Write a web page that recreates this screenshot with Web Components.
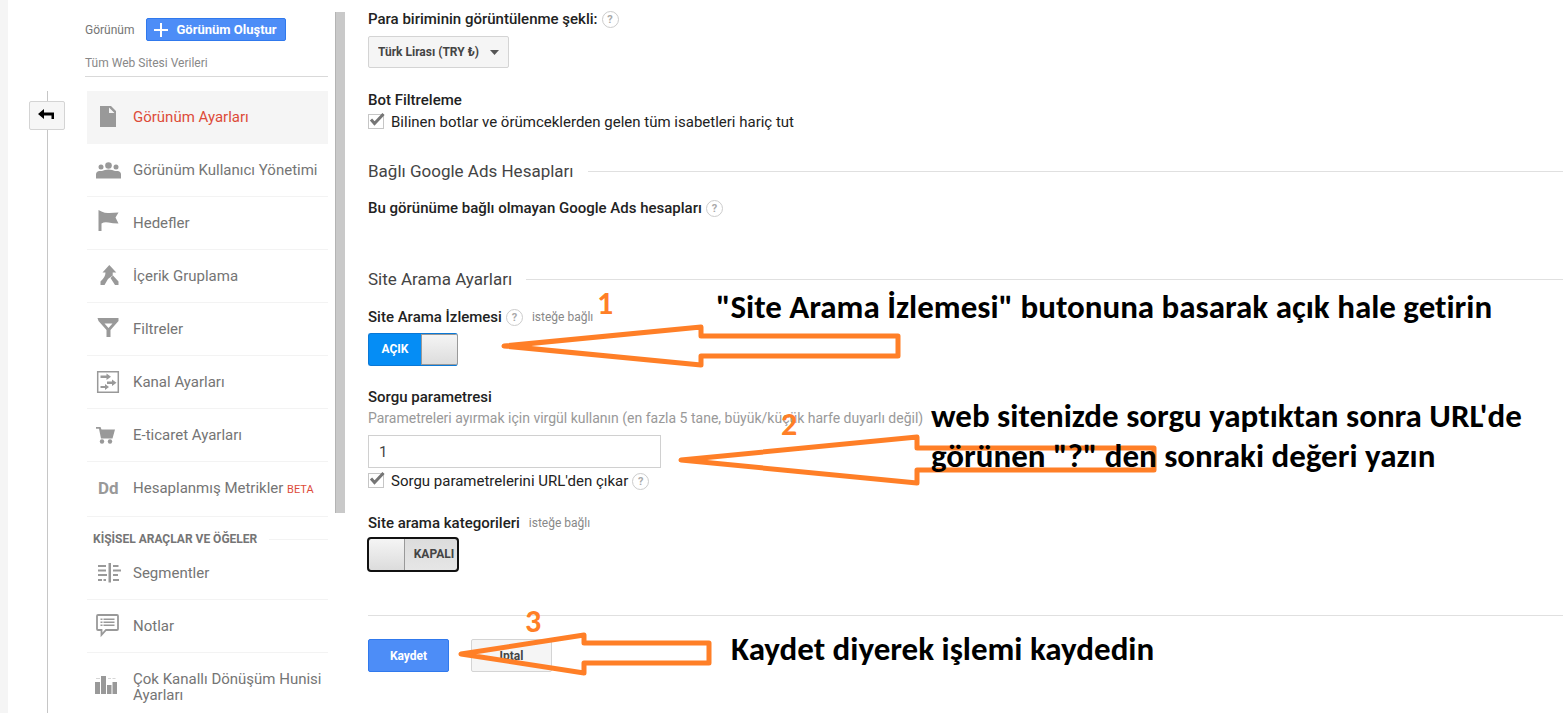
<!DOCTYPE html>
<html lang="tr">
<head>
<meta charset="utf-8">
<title>Görünüm Ayarları</title>
<style>
  body { margin: 0; background: #fff; font-family: Roboto, "Liberation Sans", sans-serif; color: #333; }
</style>
</head>
<body>
<admin-page></admin-page>

<script>
const define = (name, html, setup) => {
  const template = document.createElement('template');
  template.innerHTML = html;
  customElements.define(name, class extends HTMLElement {
    constructor() {
      super();
      this.attachShadow({ mode: 'open' }).append(template.content.cloneNode(true));
    }
    connectedCallback() { if (setup) setup(this, this.shadowRoot); }
  });
};

const ICONS = {
  page: '<path fill-rule="evenodd" d="M5 2h11l5 5v16H5zM14 3.500v5.500h5.500z"/>',
  people: '<circle cx="13.500" cy="8.500" r="3.300"/><circle cx="6" cy="10" r="2.500"/><circle cx="21" cy="10" r="2.500"/><path d="M1 21.500v-4q0-3 3-3.500h3q2.500-1.500 6.500-1.500T20 14h3q3 .5 3 3.500v4z"/>',
  flag: '<path d="M3.500 0l3 1.500q4 2 8 1.500t9-.5l-3 5 3 6q-6 0-10-1t-7 1V21h-3z"/>',
  merge: '<path d="M14.300 2l7 7.500h-3.600v3L13 16l-3.500 6H5.500v-3.500q5-4.500 5-9H7.500zM15.500 15l2.500-2.500 5.500 6V22h-3.500z"/>',
  funnel: '<path fill-rule="evenodd" d="M2.500 2h21v3l-8 9v7h-4v-7l-8-9zM9.500 7.500l4 4.500 4-4.500z"/>',
  channel: '<path fill="none" stroke="#999" stroke-width="1.500" d="M2.700 2.700h20.600v20.600H2.700z"/><path d="M5.500 6.500h6V4.500l4.500 3.300-4.500 3.300v-2h-6zM12 12.500h5v-2l4.500 3.300-4.500 3.300v-2h-5zM5.500 17h4.500v-2l4 3-4 3v-2H5.500z"/>',
  cart: '<path d="M1 5h4.500l1 2.500H20l-2.500 9H6L4 6.800H1z"/><circle cx="7" cy="19.500" r="2.200"/><circle cx="15" cy="19.500" r="2.200"/>',
  segments: '<path d="M13.500 3h2.500v19.500h-2.500zM3 5h8v2H3zM3 9.500h8v2H3zM3 14h9v2H3zM3 19h4v2H3zM8.500 19H11v2H8.500zM18 5h5.500v2H18zM18 9.500h8v2h-8zM18 14h5v2h-5zM18 19h6v2h-6z"/>',
  note: '<path fill="none" stroke="#999" stroke-width="1.800" d="M3 2h19q1 0 1 1v13q0 1-1 1H11l-4.500 5v-5H3q-1 0-1-1V3q0-1 1-1z"/><path d="M5.500 5.500h2v1.500h-2zM8.500 5.500h11v1.500h-11zM5.500 8.500h2V10h-2zM8.500 8.500h11V10h-11zM5.500 11.500h2V13h-2zM8.500 11.500h11V13h-11z"/>',
  bars: '<path d="M0 8h5v12H0zM6 2h5v18H6zM12 11h4.500v9H12zM17.500 8H22v12h-4.500z"/><path opacity=".4" d="M1 4h4v1H1zM13 4h3v1h-3zM17.500 4h3v1h-3z"/>'
};

define('side-item', `
<style>
  :host { display: block; margin-left: 2px; }
  a { display: flex; align-items: center; gap: 12px; padding: 0 0 0 8px; border-bottom: 1px solid #f3f3f3; color: #757575; text-decoration: none; font-size: 15px; line-height: 16px; }
  .text { padding: 18px 0; }
  :host([current]) a { background: #f5f5f5; border-color: #f5f5f5; color: #dd4b39; }
  .icon { flex: none; width: 26px; height: 26px; color: #999; }
  svg { display: block; width: 26px; height: 26px; fill: #999; }
  .glyph { display: block; font-size: 17px; line-height: 24px; font-weight: 700; padding-left: 3px; }
  ::slotted(small) { font-size: 11px; color: #dd4b39; }
</style>
<a href="#"><span class="icon"></span><span class="text"><slot></slot></span></a>`, (el, root) => {
  const name = el.getAttribute('icon');
  if (el.hasAttribute('current')) root.querySelector('a').setAttribute('aria-current', 'page');
  root.querySelector('.icon').innerHTML = ICONS[name]
    ? `<svg viewBox="0 0 26 26" aria-hidden="true">${ICONS[name]}</svg>`
    : `<span class="glyph">${name}</span>`;
});

define('side-nav', `
<style>
  :host { display: block; width: 243px; padding-top: 18px; }
  header { display: flex; align-items: center; gap: 12px; height: 23px; font-size: 12px; color: #757575; }
  button { display: flex; align-items: center; gap: 8px; height: 23px; padding: 0 8px 0 7px; border: 1px solid #3079ed; border-radius: 2px; background: #4d8df7; color: #fff; font: 700 13px/20px Roboto, sans-serif; }
  button svg { width: 14px; height: 14px; stroke: #fff; stroke-width: 2; }
  .property { margin: 14px 0; padding-bottom: 5px; font-size: 12px; line-height: 16px; color: #888; border-bottom: 1px solid #d9d9d9; }
  h2 { display: flex; align-items: center; gap: 12px; margin: 0 0 0 8px; padding: 14px 0 0; font-size: 12px; line-height: 16px; font-weight: 700; color: #757575; }
  h2::after { content: ""; flex: 1; border-top: 1px solid #f3f3f3; }
</style>
<header><span>Görünüm</span>
  <button type="button"><svg viewBox="0 0 14 14" aria-hidden="true"><path d="M7 0v14M0 7h14"/></svg>Görünüm Oluştur</button>
</header>
<div class="property">Tüm Web Sitesi Verileri</div>
<nav>
  <side-item icon="page" current>Görünüm Ayarları</side-item>
  <side-item icon="people">Görünüm Kullanıcı Yönetimi</side-item>
  <side-item icon="flag">Hedefler</side-item>
  <side-item icon="merge">İçerik Gruplama</side-item>
  <side-item icon="funnel">Filtreler</side-item>
  <side-item icon="channel">Kanal Ayarları</side-item>
  <side-item icon="cart">E-ticaret Ayarları</side-item>
  <side-item icon="Dd">Hesaplanmış Metrikler <small>BETA</small></side-item>
  <h2>KİŞİSEL ARAÇLAR VE ÖĞELER</h2>
  <side-item icon="segments">Segmentler</side-item>
  <side-item icon="note">Notlar</side-item>
  <side-item icon="bars">Çok Kanallı Dönüşüm Hunisi Ayarları</side-item>
</nav>`);

define('back-rail', `
<style>
  :host { display: flex; flex-direction: column; align-items: center; width: 36px; padding-top: 91px; }
  i { width: 1px; background: #c6c6c6; height: 10px; }
  i.rest { flex: 1; }
  button { width: 36px; height: 29px; padding: 0 2px 2px 0; display: grid; place-items: center; border: 1px solid #d4d4d4; border-radius: 2px; background: #f6f6f6; }
  svg { width: 16px; height: 11px; }
</style>
<i></i>
<button type="button" aria-label="Geri"><svg viewBox="0 0 16 11" aria-hidden="true"><path d="M0 5L6 0v3.500h10V10h-2.500V6.500H6V10z"/></svg></button>
<i class="rest"></i>`);

define('help-tip', `
<style>
  :host { display: inline-flex; }
  button { width: 17px; height: 17px; padding: 0; border: 1px solid #ccc; border-radius: 50%; background: #fff; color: #aaa; font: 700 11px/15px Roboto, sans-serif; text-align: center; }
</style>
<button type="button" aria-label="Yardım">?</button>`);

define('section-title', `
<style>
  :host { display: block; }
  h2 { display: flex; align-items: center; gap: 14px; margin: 0; font-size: 17px; line-height: 20px; font-weight: 400; color: #444; }
  h2::after { content: ""; flex: 1; border-top: 1px solid #e0e0e0; }
</style>
<h2><slot></slot></h2>`);

define('check-field', `
<style>
  :host { display: block; }
  div { display: flex; align-items: center; gap: 4px; height: 18px; }
  label { display: flex; align-items: center; gap: 7px; font-size: 15px; line-height: 18px; color: #222; }
  .box { position: relative; display: block; width: 16px; height: 16px; }
  input { appearance: none; display: block; box-sizing: border-box; width: 16px; height: 15px; margin: 0; border: 1px solid #c6c6c6; background: #fff; }
  svg { position: absolute; left: 0; top: -2px; width: 18px; height: 16px; fill: none; stroke: #757575; stroke-width: 3; pointer-events: none; }
</style>
<div><label><span class="box"><input type="checkbox" checked><svg viewBox="0 0 18 16" aria-hidden="true"><path d="M3 7.500L6.500 11.500L15.500 2"/></svg></span><slot></slot></label><slot name="help"></slot></div>`);

define('toggle-switch', `
<style>
  :host { display: block; }
  button { display: flex; align-items: stretch; width: 90px; height: 33px; padding: 0; overflow: hidden; border: 1px solid #0a78d6; border-right-color: #999; border-radius: 3px; background: #058df5; color: #fff; font: 700 12px/31px Roboto, sans-serif; }
  span { flex: 1; text-align: center; }
  i { width: 35px; background: linear-gradient(#f5f5f5, #dcdcdc); border-left: 1px solid #999; box-shadow: inset 0 1px #999, inset 0 -1px #999; }
  button[aria-checked=false] { flex-direction: row-reverse; border-color: #999; background: linear-gradient(#dcdcdc, #e6e6e6); color: #444; outline: 2px solid #111; outline-offset: -1px; }
  button[aria-checked=false] i { border-left: 0; border-right: 1px solid #999; box-shadow: none; }
  button[aria-checked=false] span { padding-left: 6px; }
</style>
<button type="button" role="switch"><span><slot></slot></span><i></i></button>`, (el, root) => {
  const b = root.querySelector('button');
  b.setAttribute('aria-checked', el.hasAttribute('on') ? 'true' : 'false');
  b.setAttribute('aria-label', el.getAttribute('label'));
});

define('view-settings', `
<style>
  :host { display: block; padding: 10px 0 40px 23px; }
  .label { display: flex; align-items: center; gap: 4px; height: 18px; font-size: 15px; line-height: 18px; font-weight: 500; color: #222; }
  .label small { margin-left: 5px; font-size: 12px; font-weight: 400; color: #888; }
  .select { position: relative; width: 141px; margin: 8px 0 23px; }
  select { appearance: none; display: block; box-sizing: border-box; width: 100%; height: 32px; padding: 0 9px; border: 1px solid #d4d4d4; border-radius: 2px; background: #f5f5f5; color: #444; font: 700 12px/30px Roboto, sans-serif; }
  .select svg { position: absolute; right: 10px; top: 14px; width: 9px; height: 5px; fill: #555; pointer-events: none; }
  check-field { margin-top: 4px; }
  .ads { margin: 30px 0 18px; }
  .search { margin: 52px 0 19px; }
  toggle-switch { margin-top: 7px; }
  .query { margin-top: 22px; }
  .hint { margin: 3px 0 8px; font-size: 14px; line-height: 18px; color: #999; }
  input { display: block; box-sizing: border-box; width: 293px; height: 33px; padding: 0 10px; border: 1px solid #d0d0d0; color: #444; font: 15px/31px Roboto, sans-serif; }
  .categories { margin-top: 24px; }
  .categories + toggle-switch { margin-top: 6px; }
  hr { margin: 44px 0 23px; border: 0; border-top: 1px solid #e0e0e0; }
  .actions { display: flex; gap: 22px; }
  .actions button { width: 81px; height: 33px; padding: 0; border: 1px solid #d4d4d4; border-radius: 2px; background: #f5f5f5; color: #444; font: 700 12px/30px Roboto, sans-serif; }
  .actions .primary { border-color: #3079ed; background: #4d8df7; color: #fff; }
</style>
<div class="label"><label for="currency">Para biriminin görüntülenme şekli:</label><help-tip></help-tip></div>
<div class="select"><select id="currency"><option>Türk Lirası (TRY ₺)</option></select><svg viewBox="0 0 9 5" aria-hidden="true"><path d="M0 0h9L4.500 5z"/></svg></div>
<div class="label">Bot Filtreleme</div>
<check-field>Bilinen botlar ve örümceklerden gelen tüm isabetleri hariç tut</check-field>
<section-title class="ads">Bağlı Google Ads Hesapları</section-title>
<div class="label">Bu görünüme bağlı olmayan Google Ads hesapları<help-tip></help-tip></div>
<section-title class="search">Site Arama Ayarları</section-title>
<div class="label">Site Arama İzlemesi<help-tip></help-tip><small>isteğe bağlı</small></div>
<toggle-switch on label="Site Arama İzlemesi">AÇIK</toggle-switch>
<div class="label query"><label for="query">Sorgu parametresi</label></div>
<div class="hint">Parametreleri ayırmak için virgül kullanın (en fazla 5 tane, büyük/küçük harfe duyarlı değil)</div>
<input id="query" type="text" value="1">
<check-field>Sorgu parametrelerini URL'den çıkar<help-tip slot="help"></help-tip></check-field>
<div class="label categories">Site arama kategorileri<small>isteğe bağlı</small></div>
<toggle-switch label="Site arama kategorileri">KAPALI</toggle-switch>
<hr>
<div class="actions"><button type="button" class="primary">Kaydet</button><button type="button">İptal</button></div>`);

/* Tutorial mark-up drawn over the settings: arrows, step numbers and notes. */
define('guide-layer', `
<style>
  :host { position: absolute; inset: 0; overflow: hidden; pointer-events: none; font-family: Carlito, Lato, sans-serif; font-weight: 700; font-variant-ligatures: none; }
  svg { position: absolute; inset: 0; width: 100%; height: 100%; fill: none; stroke: #ff7f27; stroke-width: 5; stroke-linejoin: round; }
  b, p { position: absolute; margin: 0; white-space: nowrap; }
  b { font-size: 32px; line-height: 32px; color: #ff7f27; }
  p { font-size: 33px; line-height: 40px; color: #000; }
</style>
<svg aria-hidden="true">
  <path d="M504 346L701 327V336H898V356H701V365Z"/>
  <path d="M681 460L917 437V448H1154V470H917V483Z"/>
  <path d="M461 654L584 635V643H709V663H584V673Z"/>
</svg>
<b style="left:597px;top:288px">1</b>
<b style="left:781px;top:409px">2</b>
<b style="left:525px;top:606px">3</b>
<p style="left:716px;top:287px">"Site Arama İzlemesi" butonuna basarak açık hale getirin</p>
<p style="left:931px;top:396px">web sitenizde sorgu yaptıktan sonra URL'de<br>görünen "?" den sonraki değeri yazın</p>
<p style="left:731px;top:629px">Kaydet diyerek işlemi kaydedin</p>`);

define('admin-page', `
<style>
  :host { position: relative; display: flex; height: 100vh; overflow: hidden; }
  .edge { flex: none; width: 8px; background: #f5f5f5; margin-right: 21px; }
  back-rail { flex: none; margin-right: 20px; }
  side-nav { flex: none; }
  .scroll { flex: none; width: 9px; height: 501px; margin: 12px 0 0 7px; border-left: 1px solid #b4b4b4; background: #c9c9c9; }
  view-settings { flex: 1; min-width: 0; }
</style>
<div class="edge"></div>
<back-rail></back-rail>
<side-nav></side-nav>
<div class="scroll"></div>
<view-settings></view-settings>
<guide-layer></guide-layer>`);
</script>
</body>
</html>
